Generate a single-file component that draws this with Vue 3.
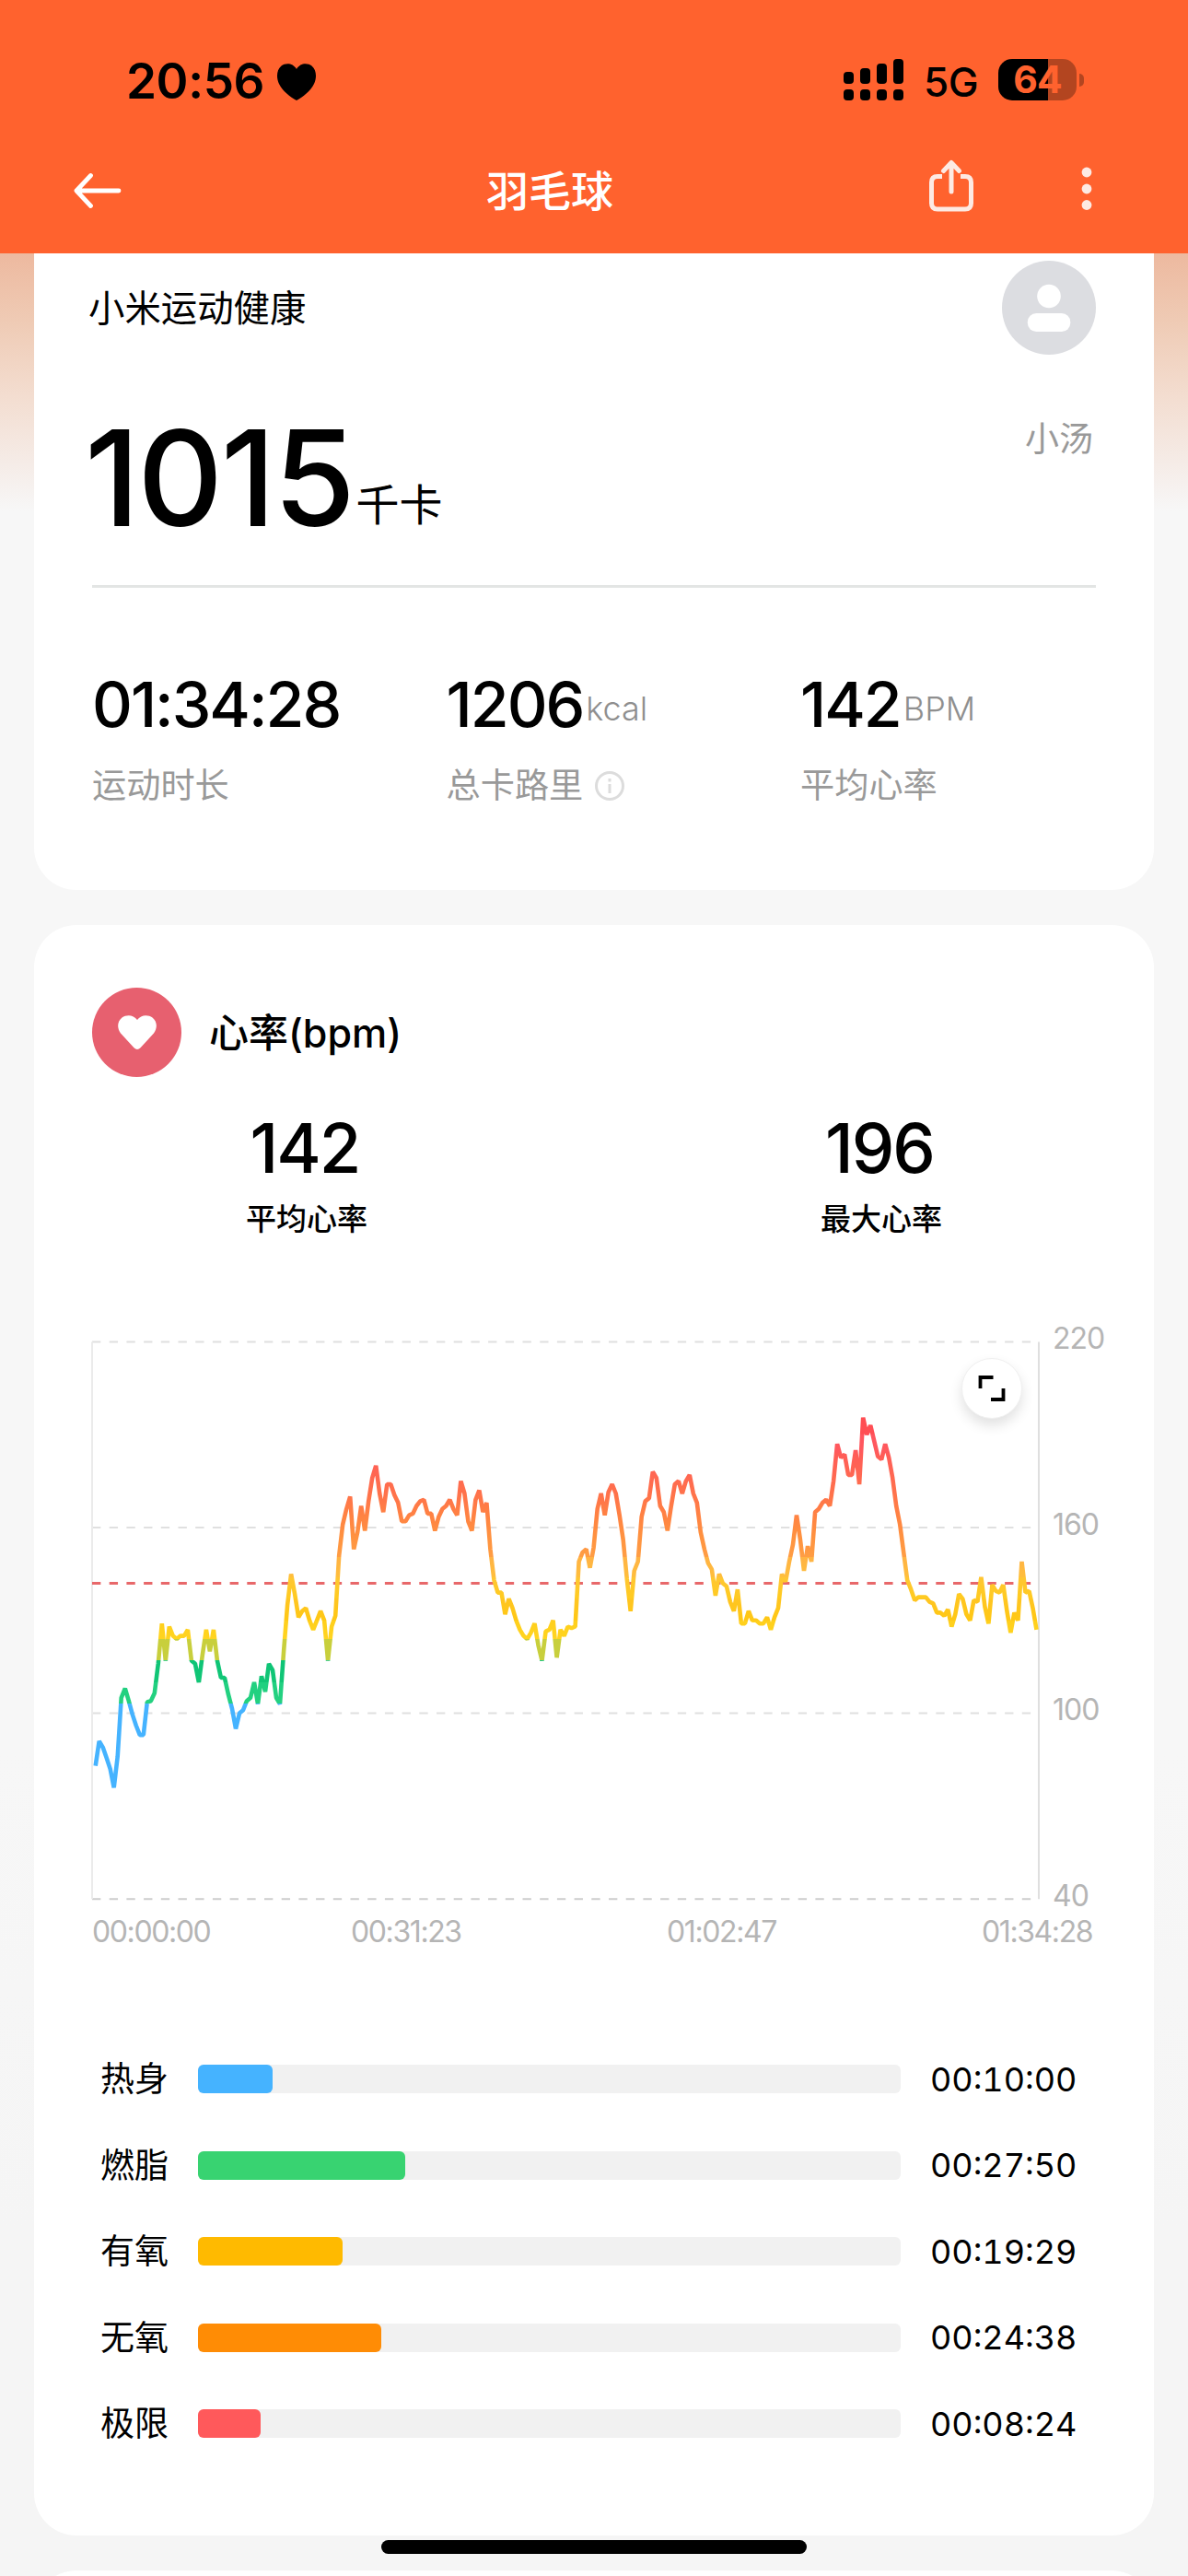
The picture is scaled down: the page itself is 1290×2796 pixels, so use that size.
<script setup>
import { computed } from 'vue';

const stats = [
  { value: '01:34:28', unit: '', label: '运动时长' },
  { value: '1206', unit: 'kcal', label: '总卡路里', info: true },
  { value: '142', unit: 'BPM', label: '平均心率' },
];

const peaks = [
  { value: 142, label: '平均心率' },
  { value: 196, label: '最大心率' },
];

const zones = [
  { name: '热身', time: '00:10:00', percent: 10.6, color: '#45b3ff' },
  { name: '燃脂', time: '00:27:50', percent: 29.5, color: '#38d371' },
  { name: '有氧', time: '00:19:29', percent: 20.6, color: '#ffba00' },
  { name: '无氧', time: '00:24:38', percent: 26.1, color: '#ff8c05' },
  { name: '极限', time: '00:08:24', percent: 8.9, color: '#ff595b' },
];

// heart rate samples, evenly spaced
const samples = [
  83, 91, 89, 85.6, 82, 76, 86, 105, 108, 104, 99.6, 96, 93, 93, 103.6, 104, 106.5, 116, 129, 117,
  128, 125, 124, 125, 125, 127, 117, 116, 110, 119, 127, 120, 127, 117, 111.5, 111.5, 106, 101.5, 95, 100,
  101, 104, 105, 110, 103, 112, 107, 116, 114, 105, 103, 120, 135, 145, 138.5, 131, 133, 134, 130, 127,
  130, 133, 130, 117, 128, 131.5, 151, 161, 166, 170, 153, 158.5, 167, 159, 168.5, 176, 180, 171, 165, 174,
  174, 170.5, 168, 162, 162, 164, 164.5, 167, 168.5, 169, 164.5, 164.5, 159, 163.5, 166, 167, 169, 166, 164, 175,
  171, 162, 159, 169, 172, 165, 168, 153, 143, 139, 139, 132, 137, 134, 130, 127, 125, 124, 126, 129,
  122, 117, 126.5, 127, 130, 118, 127, 125, 128, 127.5, 128, 149, 152, 153, 147, 153.5, 166, 171, 164, 171.5,
  174, 171, 164, 156, 143.5, 133, 146, 149, 163.5, 168.5, 169.5, 178, 176, 167, 165, 159, 167, 174, 175, 171,
  175, 177, 171, 168, 158.5, 153, 148.5, 146.5, 138, 145, 142, 141, 136, 133, 140, 129, 129, 133, 130, 130,
  129, 129, 131, 127, 131, 134, 145, 142.5, 149, 154.5, 164, 156, 146, 154, 149, 165, 166, 168, 169, 167,
  175, 187, 182.6, 183.6, 177, 177, 185, 174, 195.5, 190, 193, 188, 183, 182, 187, 182.6, 176, 167, 161, 152,
  143, 140, 136.5, 137.5, 137.5, 137.5, 136, 135.5, 132.5, 132.5, 131.5, 133.5, 128, 132, 138.5, 137, 132, 130, 136.5, 136,
  144, 134.5, 129, 141.5, 139.5, 139, 141.5, 133, 126, 132.5, 130, 149, 139, 139.5, 134, 127,
];

const TOP = 26.4;
const y = (bpm) => TOP + (220 - bpm) * 3.36;

const points = computed(() =>
  samples.map((v, i) => `${(3.7 + i * 4.007).toFixed(1)},${y(v).toFixed(1)}`).join(' ')
);

const ticks = [220, 160, 100, 40];

const times = [
  { x: 0, text: '00:00:00' },
  { x: 281, text: '00:31:23' },
  { x: 624, text: '01:02:47' },
  { x: 966, text: '01:34:28' },
];

// colour bands, from 200 bpm down to 70 bpm
const bands = [
  [200, '#ff4a50'], [190, '#ff4f55'], [190, '#ff5560'], [184, '#ff5a5c'],
  [184, '#ff5c58'], [177, '#ff6752'], [170, '#ff744a'], [164, '#ff8243'],
  [157, '#ff9240'], [150.5, '#ff9d44'], [150.5, '#ffb244'], [144, '#ffbe3c'],
  [144, '#ffc632'], [137, '#ffcb20'], [137, '#ffc522'], [130, '#ffc814'],
  [130, '#ffcf1c'], [124, '#ffd420'], [124, '#c8cf3c'], [117, '#c8cf3c'],
  [117, '#0ec476'], [110, '#12c676'], [110, '#20d080'], [103.2, '#24d180'],
  [103.2, '#45b3ff'], [70, '#45b3ff'],
];
const offset = (bpm) => (200 - bpm) / 130;
</script>

<template>
  <div class="page">
    <header class="header">
      <div class="status">
        <span class="clock">20:56</span>
        <svg class="status-heart" viewBox="0 0 44 40"><path d="M22 6C18-1 10-1 5.500 2.500C0 7 0 16 3 22C7 30 15 36 22 40C29 36 37 30 41 22C44 16 44 7 38.500 2.500C34-1 26-1 22 6Z"/></svg>
        <svg class="signal" viewBox="0 0 66 45">
          <rect x="0" y="14" width="11" height="13" rx="4"/>
          <rect x="18" y="10" width="11" height="17" rx="4"/>
          <rect x="36" y="5" width="11" height="22" rx="4"/>
          <rect x="54" y="0" width="11" height="27" rx="4"/>
          <rect v-for="n in 4" :key="n" :x="(n - 1) * 18" y="33" width="11" height="12" rx="4"/>
        </svg>
        <span class="network">5G</span>
        <div class="battery"><span>64</span></div>
        <i class="battery-cap"></i>
      </div>
      <nav class="nav">
        <svg class="back" viewBox="0 0 52 40" fill="none" stroke="currentColor" stroke-width="4.8" stroke-linecap="round" stroke-linejoin="round"><path d="M49 20H3M18.500 3.500L3 20L18.500 36.500"/></svg>
        <h1>羽毛球</h1>
        <svg class="share" viewBox="0 0 50 58" fill="none" stroke="currentColor" stroke-width="5" stroke-linecap="round" stroke-linejoin="round">
          <path d="M15 18.500H10Q3.500 18.500 3.500 25V47.500Q3.500 54 10 54H40Q46.500 54 46.500 47.500V25Q46.500 18.500 40 18.500H35" stroke-linecap="butt"/>
          <path d="M25 35V4M16.500 12.500L25 3.500L33.500 12.500"/>
        </svg>
        <svg class="more" viewBox="0 0 12 48" fill="currentColor"><circle cx="6" cy="6" r="5.400"/><circle cx="6" cy="24" r="5.400"/><circle cx="6" cy="41.500" r="5.400"/></svg>
      </nav>
    </header>

    <section class="card summary">
      <div class="brand">
        <span>小米运动健康</span>
        <svg viewBox="0 0 102 102">
          <circle cx="51" cy="51" r="51" fill="#dcdde1"/>
          <circle cx="51" cy="38.500" r="12.800" fill="#fff"/>
          <rect x="27.800" y="57" width="46.500" height="20" rx="9.500" fill="#fff"/>
        </svg>
      </div>
      <div class="hero">
        <span class="hero-value">1015</span>
        <span class="hero-unit">千卡</span>
        <span class="user">小汤</span>
      </div>
      <div class="stats">
        <div v-for="s in stats" :key="s.label" class="stat">
          <div class="stat-value"><b>{{ s.value }}</b><span>{{ s.unit }}</span></div>
          <div class="stat-label">
            {{ s.label }}
            <svg v-if="s.info" viewBox="0 0 34 34" fill="none" stroke="#dcdcdc" stroke-width="3"><circle cx="17" cy="17" r="14.500"/><path d="M17 15V25M17 9V12.500"/></svg>
          </div>
        </div>
      </div>
    </section>

    <section class="card heart">
      <div class="heart-title">
        <div class="heart-icon">
          <svg viewBox="0 0 42 37" fill="#fff"><path d="M21 5C17-1 9-1 4.500 2.500C-1 7-1 14 3 19.500L17.500 35.300Q21 38.500 24.500 35.300L39 19.500C43 14 43 7 37.500 2.500C33-1 25-1 21 5Z"/></svg>
        </div>
        <h2>心率(bpm)</h2>
      </div>

      <div class="peaks">
        <div v-for="p in peaks" :key="p.label" class="peak">
          <b>{{ p.value }}</b>
          <span>{{ p.label }}</span>
        </div>
      </div>

      <div class="chart">
        <svg viewBox="0 0 1116 690">
          <defs>
            <linearGradient id="bpm" gradientUnits="userSpaceOnUse" x1="0" :y1="y(200)" x2="0" :y2="y(70)">
              <stop v-for="(b, i) in bands" :key="i" :offset="offset(b[0])" :stop-color="b[1]"/>
            </linearGradient>
          </defs>
          <line v-for="t in ticks" :key="t" class="grid" :class="{ base: t === 40 }" x1="0" x2="1020" :y1="y(t)" :y2="y(t)"/>
          <line class="axis-left" x1="0" x2="0" :y1="y(220)" :y2="y(40)"/>
          <line class="axis-right" x1="1028" x2="1028" :y1="y(220)" :y2="y(40)"/>
          <line class="average" x1="0" x2="1020" :y1="y(142)" :y2="y(142)"/>
          <polyline class="line" :points="points" stroke="url(#bpm)"/>
          <text v-for="t in ticks" :key="t" x="1043" :y="y(t) + 7.500">{{ t }}</text>
          <text v-for="t in times" :key="t.text" :x="t.x" y="678" class="time">{{ t.text }}</text>
        </svg>
        <button class="expand">
          <svg viewBox="0 0 30 30" fill="none" stroke="#000" stroke-width="3.800"><path d="M2.500 15V3H16.500M14 27H27.500V15"/></svg>
        </button>
      </div>

      <div class="zones">
        <div v-for="z in zones" :key="z.name" class="zone">
          <span class="zone-name">{{ z.name }}</span>
          <div class="track"><div class="fill" :style="{ width: z.percent + '%', background: z.color }"></div></div>
          <span class="zone-time">{{ z.time }}</span>
        </div>
      </div>
    </section>

    <section class="card next"></section>
    <div class="home-bar"></div>
  </div>
</template>

<style>
body { margin: 0; background: #f6f6f6; }
</style>

<style scoped>
.page {
  position: relative;
  width: 1290px;
  height: 2796px;
  overflow: hidden;
  box-sizing: border-box;
  background: linear-gradient(#edb99f 275px, #efcbb5 350px, #f3ddd0 430px, #f5ebe6 500px, #f7f7f7 555px, #f7f7f7 1900px, #f5f5f5 2420px);
  font-family: Inter, "Noto Sans CJK SC", sans-serif;
  color: #000;
  line-height: 1;
}
.page * { box-sizing: border-box; }
svg { display: block; flex-shrink: 0; }

.header {
  height: 275px;
  background: #ff622e;
}
.status {
  display: flex;
  align-items: center;
  height: 173px;
  padding-left: 137px;
}
.clock {
  width: 163px;
  font-size: 53px;
  font-weight: 600;
  letter-spacing: -0.4px;
  padding-top: 3px;
}
.status-heart { width: 44px; height: 40px; margin-top: 5px; }
.signal { width: 66px; height: 45px; margin-left: 572px; }
.network {
  width: 81px;
  margin-left: 21px;
  padding-top: 5px;
  font-size: 44px;
  font-weight: 500;
  letter-spacing: -0.5px;
}
.battery {
  width: 85px;
  height: 45px;
  border-radius: 15px;
  background: linear-gradient(90deg, #000 54px, #b34520 54px);
  color: #ff622e;
  font-size: 41px;
  font-weight: 700;
  letter-spacing: -1px;
  line-height: 45px;
  text-align: center;
}
.battery-cap {
  width: 5px;
  height: 14px;
  margin-left: 3px;
  border-radius: 0 7px 7px 0;
  background: #b34520;
}

.nav {
  display: flex;
  align-items: center;
  height: 68px;
  padding-left: 80px;
  color: #fff;
}
.back { width: 52px; height: 40px; margin-top: -1px; }
.nav h1 {
  width: 140px;
  margin: 0 0 0 396px;
  font-size: 46px;
  font-weight: 500;
}
.share { width: 50px; height: 58px; margin: -10px 0 0 340px; color: #fdeae3; }
.more { width: 12px; height: 48px; margin: -4px 0 0 116px; color: #fdeae3; }

.card {
  width: 1216px;
  margin: 0 auto;
  padding: 0 63px;
  border-radius: 46px;
  background: #fff;
}

.summary {
  height: 691px;
  padding-top: 8px;
  border-radius: 0 0 46px 46px;
}
.brand {
  display: flex;
  justify-content: space-between;
  align-items: center;
  margin-left: -4px;
  font-size: 39.4px;
}
.brand span { padding-top: 3px; }
.brand svg { width: 102px; height: 102px; }
.hero {
  display: flex;
  height: 253px;
  padding-top: 62px;
  border-bottom: 3px solid #e3e5e4;
}
.hero-value {
  height: 143px;
  margin-left: -8px;
  font-size: 144px;
  font-weight: 500;
  letter-spacing: -2.500px;
}
.hero-unit {
  margin: 77px 0 0 3px;
  font-size: 47px;
}
.user {
  margin: 11px 3px 0 auto;
  font-size: 37px;
  color: #999;
}
.stats {
  display: flex;
  padding-top: 92px;
}
.stat {
  flex-shrink: 0;
  width: 384.5px;
  white-space: nowrap;
}
.stat-value {
  display: flex;
  align-items: flex-end;
  font-feature-settings: "calt" 0;
}
.stat-value b {
  font-size: 68px;
  font-weight: 500;
  letter-spacing: -2px;
}
.stat-value span {
  margin: 0 0 11px 3px;
  font-size: 36px;
  font-weight: 300;
  color: #8f8f8f;
}
.stat-label {
  display: flex;
  align-items: center;
  gap: 12px;
  height: 37px;
  margin-top: 36px;
  font-size: 37.2px;
  color: #999;
}
.stat-label svg { width: 34px; height: 34px; }

.heart {
  height: 1748px;
  margin-top: 38px;
  padding-top: 68px;
}
.heart-title {
  display: flex;
  align-items: center;
}
.heart-icon {
  display: flex;
  align-items: center;
  justify-content: center;
  width: 97px;
  height: 97px;
  border-radius: 50%;
  background: #e7606f;
}
.heart-icon svg { width: 42px; height: 37px; }
.heart-title h2 {
  margin: 0 0 0 30px;
  padding-top: 2px;
  font-size: 43px;
  font-weight: 500;
}
.peaks {
  display: flex;
  margin: 40px -79px 0;
}
.peak {
  flex: 1;
  display: flex;
  flex-direction: column;
  align-items: center;
}
.peak b {
  padding-right: 4px;
  font-size: 74px;
  font-weight: 500;
  letter-spacing: -2px;
}
.peak span {
  margin-top: 24px;
  font-size: 33px;
  font-weight: 500;
}

.chart {
  position: relative;
  margin-top: 90px;
}
.chart > svg {
  width: 1116px;
  height: 690px;
  overflow: visible;
}
.chart text {
  fill: #b5b5b5;
  font-size: 32px;
  font-weight: 400;
  letter-spacing: -1px;
  font-feature-settings: "calt" 0;
}
.chart .time { letter-spacing: -1.4px; }
.grid { stroke: #e0e0e0; stroke-width: 2; stroke-dasharray: 9.35 9.35; }
.grid.base { stroke: #cdcdcd; }
.axis-left { stroke: #ebebeb; stroke-width: 2; }
.axis-right { stroke: #dfdfdf; stroke-width: 2; }
.average { stroke: #e8686a; stroke-width: 3; stroke-dasharray: 9.35 9.35; }
.line { fill: none; stroke-width: 4.6; stroke-linejoin: bevel; }
.expand {
  position: absolute;
  left: 944px;
  top: 44px;
  display: flex;
  align-items: center;
  justify-content: center;
  width: 66px;
  height: 66px;
  padding: 0;
  border: 1px solid #f0f0f0;
  border-radius: 50%;
  background: #fff;
  box-shadow: 0 7px 14px rgba(0, 0, 0, 0.12);
}
.expand svg { width: 30px; height: 30px; }

.zones {
  padding-left: 9px;
  margin-top: 89.75px;
}
.zone {
  display: flex;
  align-items: center;
  height: 93.5px;
}
.zone-name {
  width: 106px;
  font-size: 37px;
}
.track {
  width: 763px;
  height: 31px;
  border-radius: 6px;
  background: #f1f1f1;
}
.fill {
  height: 100%;
  border-radius: 6px;
}
.zone-time {
  margin-left: 32px;
  font-size: 36px;
  font-variant-numeric: tabular-nums;
}

.next { height: 100px; margin-top: 38px; }
.home-bar {
  position: absolute;
  left: 414px;
  top: 2757px;
  width: 462px;
  height: 15px;
  border-radius: 8px;
  background: #000;
}
</style>
